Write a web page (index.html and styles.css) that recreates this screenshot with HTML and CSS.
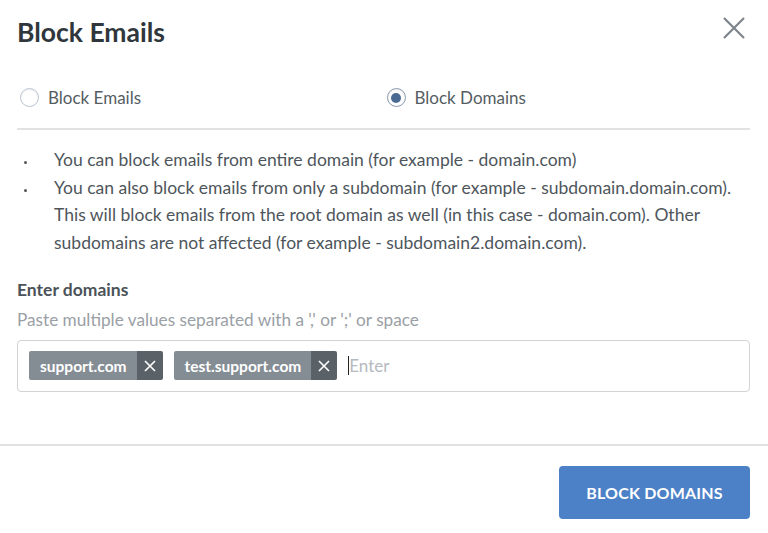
FILE: index.html
```html
<!DOCTYPE html>
<html>
<head>
<meta charset="utf-8">
<link rel="stylesheet" href="styles.css">
</head>
<body>
<div class="modal">
  <div class="header">
    <h1 class="title">Block Emails</h1>
    <svg class="close" width="22" height="22" viewBox="0 0 22 22"><path d="M1 1L21 21M21 1L1 21" stroke="#7d848a" stroke-width="2.2" fill="none"/></svg>
  </div>
  <div class="body">
    <div class="radios">
      <label class="radio"><span class="circle"></span>Block Emails</label>
      <label class="radio checked"><span class="circle"><span class="dot"></span></span>Block Domains</label>
    </div>
    <ul class="bullets">
      <li>You can block emails from entire domain (for example - domain.com)</li>
      <li>You can also block emails from only a subdomain (for example - subdomain.domain.com).<br>This will block emails from the root domain as well (in this case - domain.com). Other subdomains are not affected (for example - subdomain2.domain.com).</li>
    </ul>
    <div class="field-label">Enter domains</div>
    <div class="field-hint">Paste multiple values separated with a ',' or ';' or space</div>
    <div class="tag-input">
      <span class="tag"><span class="tag-text">support.com</span><span class="tag-x"><svg width="12" height="12" viewBox="0 0 12 12"><path d="M1 1L11 11M11 1L1 11" stroke="#fff" stroke-width="1.6"/></svg></span></span>
      <span class="tag"><span class="tag-text">test.support.com</span><span class="tag-x"><svg width="12" height="12" viewBox="0 0 12 12"><path d="M1 1L11 11M11 1L1 11" stroke="#fff" stroke-width="1.6"/></svg></span></span>
      <span class="cursor"></span><span class="placeholder">Enter</span>
    </div>
  </div>
  <div class="footer">
    <button class="primary">BLOCK DOMAINS</button>
  </div>
</div>
</body>
</html>
```
FILE: styles.css
```css
html, body {
  margin: 0;
  padding: 0;
  background: #fff;
}
body {
  font-family: Lato, "Open Sans", sans-serif;
  color: #4b5359;
  width: 768px;
}
.modal {
  display: flex;
  flex-direction: column;
}
.header {
  display: flex;
  justify-content: space-between;
  align-items: center;
  padding: 16px 23px 0 17px;
  height: 32px;
}
.title {
  margin: 0;
  font-size: 26.5px;
  font-weight: 700;
  color: #30373c;
}
.close {
  display: block;
  margin-top: -8px;
}
.body {
  padding: 0 18px 0 17px;
}
.radios {
  display: flex;
  margin-top: 39px;
  padding-bottom: 20px;
  border-bottom: 2px solid #e2e2e2;
}
.radio {
  display: flex;
  align-items: center;
  font-size: 17px;
  color: #555d63;
  width: 368px;
}
.circle {
  width: 17px;
  height: 17px;
  border: 1.5px solid #b9c6d3;
  border-radius: 50%;
  margin: 0 9px 0 3px;
  display: flex;
  align-items: center;
  justify-content: center;
  box-shadow: inset 0 1px 2px rgba(0,0,0,0.08);
}
.checked .circle {
  border-color: #8b9aab;
}
.dot {
  width: 10px;
  height: 10px;
  background: #4a6a93;
  border-radius: 50%;
}
.bullets {
  margin: 16px 0 0 0;
  padding: 0 0 0 37px;
  font-size: 17.5px;
  line-height: 27.7px;
  color: #4e565c;
  list-style: none;
}
.bullets li {
  position: relative;
}
.bullets li::before {
  content: "";
  position: absolute;
  left: -30px;
  top: 15px;
  width: 3px;
  height: 3px;
  border-radius: 50%;
  background: #555;
}
.field-label {
  margin-top: 22px;
  font-size: 17.5px;
  font-weight: 700;
  color: #4b5359;
  line-height: 22px;
}
.field-hint {
  margin-top: 8px;
  font-size: 17.2px;
  color: #9aa0a5;
  line-height: 22px;
}
.tag-input {
  margin-top: 9px;
  border: 1px solid #d3d3d3;
  border-radius: 4px;
  display: flex;
  align-items: center;
  padding-left: 11px;
  box-sizing: border-box;
  height: 52px;
}
.tag {
  display: flex;
  height: 29px;
  border-radius: 2px;
  overflow: hidden;
  margin-right: 11px;
}
.tag-text {
  background: #858d94;
  color: #fff;
  font-weight: 700;
  font-size: 15.5px;
  padding: 0 10px 0 11px;
  display: flex;
  align-items: center;
}
.tag-x {
  background: #5a6167;
  width: 26px;
  display: flex;
  align-items: center;
  justify-content: center;
}
.tag-x svg {
  display: block;
}
.cursor {
  width: 1px;
  height: 19px;
  background: #222;
}
.placeholder {
  font-size: 17px;
  color: #b4bac0;
}
.footer {
  margin-top: 52px;
  border-top: 2px solid #e2e2e2;
  padding: 20px 18px 0 0;
  display: flex;
  justify-content: flex-end;
}
.primary {
  width: 191px;
  height: 53px;
  background: #4c81c7;
  border: none;
  border-radius: 4px;
  color: #fff;
  font-family: Lato, sans-serif;
  font-size: 16px;
  font-weight: 700;
  letter-spacing: 0.2px;
}
```
